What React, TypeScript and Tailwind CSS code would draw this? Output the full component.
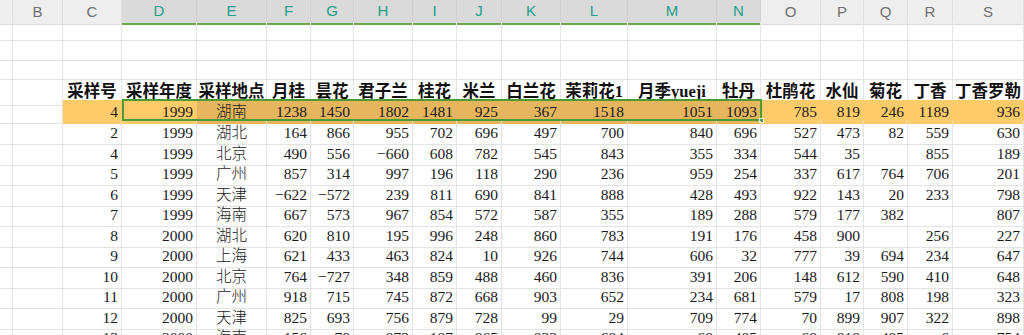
import React from 'react';

const COLS =
  'grid grid-cols-[13px_50px_59px_75px_70px_44px_43px_59px_44px_45px_59px_67px_89px_44px_60px_43px_44px_45px_71px]';

const letters = ['', 'B', 'C', 'D', 'E', 'F', 'G', 'H', 'I', 'J', 'K', 'L', 'M', 'N', 'O', 'P', 'Q', 'R', 'S'];

const heads = ['采样号', '采样年度', '采样地点', '月桂', '昙花', '君子兰', '桂花', '米兰', '白兰花', '茉莉花1', '月季yueji', '牡丹', '杜鹃花', '水仙', '菊花', '丁香', '丁香罗勒'];

const rows: (string | number)[][] = [
  [4, 1999, '湖南', 1238, 1450, 1802, 1481, 925, 367, 1518, 1051, 1093, 785, 819, 246, 1189, 936],
  [2, 1999, '湖北', 164, 866, 955, 702, 696, 497, 700, 840, 696, 527, 473, 82, 559, 630],
  [4, 1999, '北京', 490, 556, -660, 608, 782, 545, 843, 355, 334, 544, 35, '', 855, 189],
  [5, 1999, '广州', 857, 314, 997, 196, 118, 290, 236, 959, 254, 337, 617, 764, 706, 201],
  [6, 1999, '天津', -622, -572, 239, 811, 690, 841, 888, 428, 493, 922, 143, 20, 233, 798],
  [7, 1999, '海南', 667, 573, 967, 854, 572, 587, 355, 189, 288, 579, 177, 382, '', 807],
  [8, 2000, '湖北', 620, 810, 195, 996, 248, 860, 783, 191, 176, 458, 900, '', 256, 227],
  [9, 2000, '上海', 621, 433, 463, 824, 10, 926, 744, 606, 32, 777, 39, 694, 234, 647],
  [10, 2000, '北京', 764, -727, 348, 859, 488, 460, 836, 391, 206, 148, 612, 590, 410, 648],
  [11, 2000, '广州', 918, 715, 745, 872, 668, 903, 652, 234, 681, 579, 17, 808, 198, 323],
  [12, 2000, '天津', 825, 693, 756, 879, 728, 99, 29, 709, 774, 70, 899, 907, 322, 898],
  [13, 2000, '海南', 156, -78, 873, 187, 865, 833, 684, 68, 485, 68, 818, 485, 6, 754],
];

const font = { fontFamily: '"Liberation Serif", "Noto Sans CJK SC", serif' };

const fmt = (v: string | number) => (typeof v === 'number' && v < 0 ? `−${-v}` : v);

const EmptyRow: React.FC<{ h: string }> = ({ h }) => (
  <div className={`${COLS} ${h}`}>
    {letters.map((_, i) => (
      <div key={i} className="border-r border-b border-[#e3e3e3]" />
    ))}
  </div>
);

const App: React.FC = () => {
  return (
    <div className="w-[1024px] h-[335px] overflow-hidden bg-white" style={font}>
      {/* column letters */}
      <div className={`${COLS} h-[21px]`} style={{ fontFamily: '"Liberation Sans", "Noto Sans", sans-serif' }}>
        {letters.map((l, i) => {
          const sel = i >= 3 && i <= 13;
          return (
            <div
              key={i}
              className={`flex items-center justify-center text-[15px] border-r ${
                sel
                  ? 'bg-[#dadada] text-[#21a08a] border-[#d0d0d0] border-b-2 border-b-[#6aa84f]'
                  : 'bg-[#eeeeee] text-[#707070] border-[#dddddd] border-b border-b-[#dcdcdc]'
              }`}
            >
              {l}
            </div>
          );
        })}
      </div>

      <EmptyRow h="h-[20px]" />
      <EmptyRow h="h-[20px]" />
      <EmptyRow h="h-[19px]" />

      {/* field names */}
      <div className={`${COLS} h-[20px]`}>
        <div className="border-r border-b border-[#e3e3e3]" />
        <div className="border-r border-b border-[#e3e3e3]" />
        {heads.map((t, i) => (
          <div
            key={i}
            className="flex items-center justify-center whitespace-nowrap text-[16.5px] font-bold text-[#111] border-r border-b border-[#e3e3e3] overflow-visible"
          >
            {t}
          </div>
        ))}
      </div>

      {rows.map((r, ri) => {
        const hl = ri === 0;
        return (
          <div key={ri} className={`${COLS} ${hl ? 'h-[21px]' : 'h-[20.5px]'} relative`}>
            <div className="border-r border-b border-[#e3e3e3]" />
            <div className="border-r border-b border-[#e3e3e3]" />
            {r.map((v, ci) => {
              const col = ci + 2;
              const dark = hl && col >= 4 && col <= 13;
              const bg = hl ? (dark ? 'bg-[#e6b65e]' : 'bg-[#fecb6a]') : '';
              const align =
                typeof v === 'string' ? 'justify-center font-light text-[#1a1a1a]' : 'justify-end pr-[3px] text-[#1a1a1a]';
              return (
                <div
                  key={ci}
                  className={`flex items-center ${align} ${bg} whitespace-nowrap text-[15.5px] border-r border-b ${
                    hl ? 'border-transparent' : 'border-[#e3e3e3]'
                  }`}
                >
                  {fmt(v)}
                </div>
              );
            })}
            {hl && (
              <>
                <div className="absolute left-[122px] top-[-1px] w-[640px] h-[22px] border-2 border-[#4f9a35] pointer-events-none" />
                <div className="absolute left-[759px] top-[18px] w-[5px] h-[5px] bg-[#4f9a35] border border-white" />
              </>
            )}
          </div>
        );
      })}
    </div>
  );
};

export default App;
